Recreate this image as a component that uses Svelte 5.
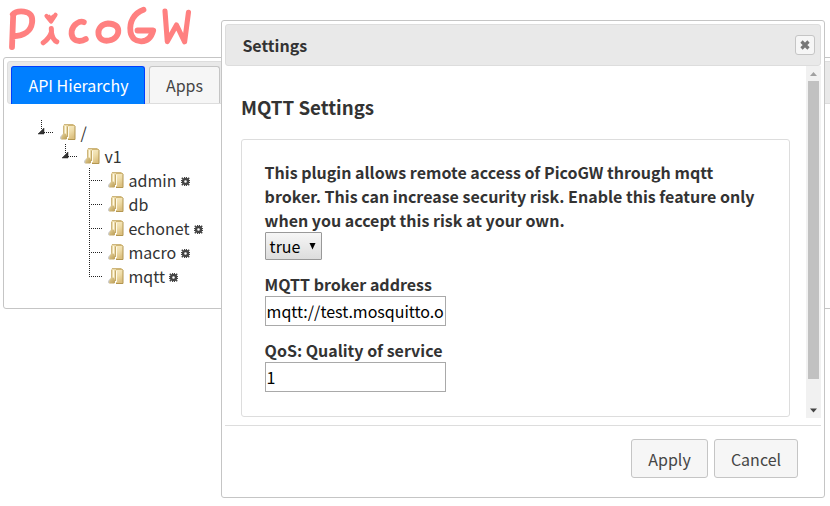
<script>
  const nodes = [
    { name: '/', level: 0 },
    { name: 'v1', level: 1 },
    { name: 'admin', level: 2, gear: true },
    { name: 'db', level: 2 },
    { name: 'echonet', level: 2, gear: true },
    { name: 'macro', level: 2, gear: true },
    { name: 'mqtt', level: 2, gear: true, last: true }
  ];
  let broker = $state('mqtt://test.mosquitto.org');
  let qos = $state('1');
</script>

<div class="page">
  <header>
    <svg class="logo" width="200" height="56" viewBox="0 0 200 56" fill="none" stroke="#ff8080" stroke-width="5.8" stroke-linecap="round" stroke-linejoin="round">
      <path d="M13.2 14.5L12 47.2M12.8 14.5C15 12 19 11 24 11.6C31 12.5 33 17 32 23C31 30 25 36 13 36.3" />
      <path d="M46.5 16L51 21.5L55.5 14.8" stroke-width="4.2" />
      <path d="M49.2 16.2L51.2 18.2L53 16" stroke-width="3" />
      <path d="M51.3 28.5L51.5 32C50 37 47 40 43.2 42.8M51.5 33C52.5 38 54 40.5 56.8 41.8" stroke-width="5" />
      <path d="M83.8 22.2C80 20.5 73 24 71.7 31C70.8 38 75 41 79.5 41C82 41 84 40.2 85.8 39" />
      <path d="M108 23.5C101.5 24 97.5 29 98.5 34.5C99.5 39.5 104 41.5 109 40.5C115 39.5 118.5 35 118.3 30.5C118 26 114 23.8 108 23.5Z" />
      <path d="M143.5 9.7C134 13 129 22 130.5 32C131.5 38 136 41.5 141.5 41.3C148 41 151.5 37 153.2 30.5L137.5 30.5" />
      <path d="M165 11L167.3 41.6L176.5 25L184.6 41.8L188.5 12.2" stroke-width="5.1" />
    </svg>
  </header>

  <main>
    <nav>
      <div class="tab active">API Hierarchy</div>
      <div class="tab apps">Apps</div>
    </nav>
    <div class="tree">
      {#each nodes as n}
        <div class="node l{n.level}">
          <svg class="link" width="20" height="24" shape-rendering="crispEdges" stroke="#222" stroke-dasharray="1 1">
            {#if n.level < 2}
              <path d="M5.5 0V10M8 12.5H18" />
              <path d="M8 8V14H2Z" fill="#333" stroke="#222" stroke-width=".5" stroke-dasharray="none" shape-rendering="auto" />
            {:else}
              <path d={n.last ? 'M5.5 0V13M5 12.5H18' : 'M5.5 0V24M5 12.5H18'} />
            {/if}
          </svg>
          <svg class="folder" width="17" height="18" viewBox="0 0 17 18">
            <defs>
              <linearGradient id="leaf" x2=".4" y2="1"><stop stop-color="#f8ebc5" /><stop offset=".5" stop-color="#eedca8" /><stop offset="1" stop-color="#dcc080" /></linearGradient>
              <linearGradient id="front" x2="1" y2="1"><stop stop-color="#e5d19a" /><stop offset="1" stop-color="#b99b52" /></linearGradient>
            </defs>
            <path d="M0 16V14L2.5 11V16.5Z" fill="#bbb" opacity=".7" />
            <path d="M3 12V2.5L4 1.5H13.5V4H7V12Z" fill="#ead9a8" />
            <path d="M4 1.5H13.5M3.5 3V11" stroke="#cdb67c" />
            <path d="M5.5 3V11" stroke="#fff8e0" />
            <path d="M7.5 3.5V14" stroke="#c4a968" />
            <path d="M8 3H14.5L15 4V16H8Z" fill="url(#leaf)" />
            <path d="M8 2.5H15" stroke="#d0b572" />
            <path d="M15 3V16.5H8" fill="none" stroke="#b39650" />
            <path d="M8.5 4V15" stroke="#fffae8" />
            <path d="M3 10.5H5.5L7 12.5V15.8L6 16.5H1.3V14Z" fill="url(#front)" />
          </svg>
          <span class="label">{n.name}</span>
          {#if n.gear}
            <svg class="gear" width="10" height="10" viewBox="0 0 10 10" fill="none" stroke="#444">
              <circle cx="4.5" cy="4.5" r="2.5" stroke-width="2.4" />
              <path d="M3.5 0V2M5.5 0V2M3.5 7V9M5.5 7V9M0 3.5H2M0 5.5H2M7 3.5H9M7 5.5H9" />
              <path d="M.8 .8L2.5 2.5M6.5 6.5L8.2 8.2M.8 8.2L2.5 6.5M6.5 2.5L8.2 .8" stroke-width="1.6" />
            </svg>
          {/if}
        </div>
      {/each}
    </div>
  </main>

  <section class="dialog">
    <div class="titlebar">
      <span>Settings</span>
      <button class="close" aria-label="Close">
        <svg width="10" height="10" viewBox="0 0 10 10"><path d="M1.5 1.5L8.5 8.5M8.5 1.5L1.5 8.5" stroke="#777" stroke-width="3.2" /></svg>
      </button>
    </div>
    <div class="body">
      <div class="content">
        <h3>MQTT Settings</h3>
        <div class="fields">
          <div class="text">This plugin allows remote access of PicoGW through mqtt<br />broker. This can increase security risk. Enable this feature only<br />when you accept this risk at your own.</div>
          <div class="select"><span>true</span><svg width="7" height="7"><path d="M.5 0H6.5L3.5 6.5Z" fill="#000" /></svg></div>
          <div class="text next">MQTT broker address</div>
          <input bind:value={broker} />
          <div class="text next">QoS: Quality of service</div>
          <input bind:value={qos} />
        </div>
      </div>
      <div class="scroll">
        <svg width="15" height="15"><path d="M4 10L7.5 6L11 10Z" fill="#a0a0a0" /></svg>
        <div class="thumb"></div>
        <svg width="15" height="15"><path d="M4 5.5H11L7.5 9.5Z" fill="#444" /></svg>
      </div>
    </div>
    <div class="actions">
      <button class="apply">Apply</button>
      <button class="cancel">Cancel</button>
    </div>
  </section>
</div>

<style>
  :global(body) { background: #fff; overflow: hidden; }
  * { box-sizing: border-box; }
  .page { position: relative; width: 830px; height: 506px; overflow: hidden; font: 16px/24px "Noto Sans CJK JP", "Noto Sans CJK SC", sans-serif; color: #333; }
  header { height: 57px; }
  svg { display: block; flex: none; }
  main { margin-left: 3px; width: 840px; height: 252px; border: 1px solid #c5c5c5; border-radius: 3px; padding: 3px; }
  nav { display: flex; align-items: flex-end; gap: 4px; height: 43px; padding-left: 3px; background: #e9e9e9; border: 1px solid #ddd; border-radius: 3px; }
  .tab { height: 37px; border: 1px solid #c5c5c5; border-bottom: 0; border-radius: 3px 3px 0 0; background: #f6f6f6; color: #454545; text-align: center; line-height: 36px; }
  .tab.active { width: 134px; height: 38px; margin-bottom: -1px; padding-left: 1px; border-color: #003eff; background: #007fff; color: #fff; }
  .apps { width: 71px; }
  .tree { padding: 16px 0 0 29px; }
  .node { display: flex; height: 24px; }
  .l1 { padding-left: 24px; }
  .l2 { padding-left: 48px; }
  .folder { margin: 3px 0 0 4px; }
  .label { margin-left: 3.5px; line-height: 24px; }
  .gear { margin: 9px 0 0 4.5px; }
  .dialog { position: absolute; left: 221px; top: 20px; width: 604px; height: 478px; padding: 3px; background: #fff; border: 1px solid #c5c5c5; border-radius: 3px; }
  .titlebar { display: flex; align-items: center; justify-content: space-between; height: 42px; padding: 0 5px 0 16.4px; background: #e9e9e9; border: 1px solid #ddd; border-radius: 3px; font-weight: bold; }
  button { font: inherit; color: #454545; background: #f6f6f6; border: 1px solid #c5c5c5; border-radius: 3px; padding: 0; }
  .close { display: flex; align-items: center; justify-content: center; width: 20px; height: 20px; }
  .body { display: flex; justify-content: space-between; height: 352px; }
  .content { padding-left: 16px; width: 565px; }
  h3 { margin: 27px 0 18px; font-size: 18.72px; line-height: 28px; font-weight: bold; }
  .fields { height: 278px; border: 1px solid #ddd; border-radius: 3px; padding: 20px 0 0 22.6px; }
  .text { font-weight: bold; white-space: nowrap; }
  .select { display: flex; justify-content: space-between; width: 57px; height: 28px; padding: 0 4.6px 0 4px; border: 1px solid #999; border-radius: 1px; background: linear-gradient(#f6f6f6, #ddd); color: #000; line-height: 26px; }
  .select svg { margin-top: 10px; }
  .next { margin-top: 12px; }
  input { display: block; width: 181px; height: 30px; margin: 0; padding: 1px; border: 1px solid #a9a9a9; border-radius: 0; background: #fff; color: #000; font: inherit; outline: 0; }
  .scroll { display: flex; flex-direction: column; width: 15px; height: 352px; background: #f1f1f1; }
  .thumb { height: 298px; margin: 0 2px 24px; background: #c1c1c1; }
  .actions { display: flex; gap: 6px; margin-top: 7px; padding: 13px 23px 0 0; justify-content: flex-end; border-top: 1px solid #ddd; }
  .actions button { height: 39px; line-height: 36px; padding-top: 1px; }
  .apply { width: 77px; }
  .cancel { width: 84px; }
</style>
